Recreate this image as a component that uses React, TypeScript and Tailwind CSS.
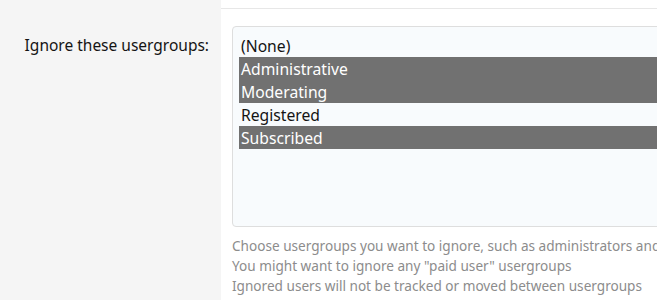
const GROUPS = [
  { label: "(None)", selected: false },
  { label: "Administrative", selected: true },
  { label: "Moderating", selected: true },
  { label: "Registered", selected: false },
  { label: "Subscribed", selected: true },
];

const HINTS = [
  "Choose usergroups you want to ignore, such as administrators and moderators",
  'You might want to ignore any "paid user" usergroups',
  "Ignored users will not be tracked or moved between usergroups",
];

const App = () => {
  return (
    <div
      className="flex h-[300px] w-[657px] overflow-hidden bg-white text-[#141414]"
      style={{ fontFamily: '"Noto Sans", "Open Sans", sans-serif' }}
    >
      {/* label column */}
      <div className="w-[221px] shrink-0 bg-[#f5f5f5] pt-[33px] pr-[12px] text-right">
        <label className="text-[15.5px] leading-[23px]">Ignore these usergroups:</label>
      </div>

      {/* input column */}
      <div className="flex min-w-0 flex-1 flex-col">
        <div className="h-[9px] shrink-0 border-b border-[#e7e7e7]" />
        <div className="pl-[11px] pt-[17px]">
          <div className="h-[201px] w-[640px] rounded-[4px] border border-[#dedede] bg-[#f8fbfd] px-[6px] pt-[7px]">
            {GROUPS.map((group) => (
              <div
                key={group.label}
                className={
                  group.selected
                    ? "h-[23px] bg-[#717171] pl-[2px] text-[15.7px] leading-[24px] text-white"
                    : "h-[23px] pl-[2px] text-[15.7px] leading-[24px] text-[#141414]"
                }
              >
                {group.label}
              </div>
            ))}
          </div>
          <div className="mt-[9px] whitespace-nowrap text-[13.6px] leading-[20px] text-[#8c8c8c]">
            {HINTS.map((hint) => (
              <div key={hint}>{hint}</div>
            ))}
          </div>
        </div>
      </div>
    </div>
  );
};

export default App;
